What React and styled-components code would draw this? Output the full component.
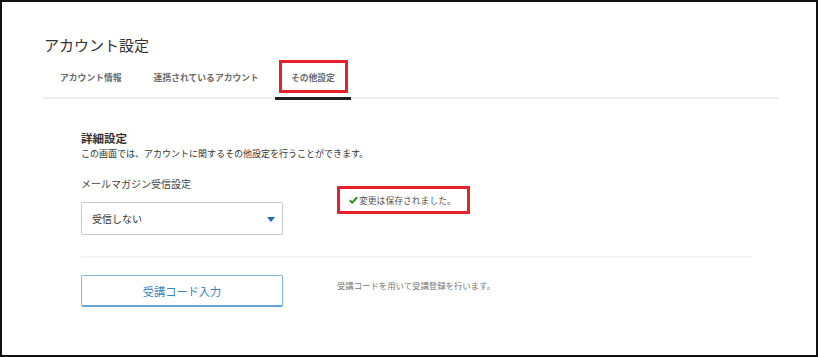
import React from "react";
import styled, { createGlobalStyle } from "styled-components";

const Global = createGlobalStyle`
  html, body { margin: 0; padding: 0; background: #fff; }
  body { font-family: "Noto Sans CJK JP", "Noto Sans", sans-serif; }
  * { box-sizing: border-box; }
`;

const Frame = styled.div`
  width: 818px;
  height: 357px;
  border: 2px solid #111;
  padding: 33px 0 0 41px;
  background: #fff;
`;

const Header = styled.div`
  width: 736px;
`;

const Title = styled.h1`
  margin: 0;
  padding-left: 1px;
  font-size: 15px;
  line-height: 20px;
  font-weight: 400;
  color: #333;
`;

const TabList = styled.div`
  display: flex;
  padding-left: 1px;
  box-shadow: inset 0 -2px 0 #efefef;
`;

const Tab = styled.div`
  padding: 17px 16px 12px;
  font-size: 8.8px;
  line-height: 12px;
  font-weight: 700;
  color: #6b6b6b;
  border-bottom: 3px solid ${(p) => (p.$active ? "#222" : "transparent")};
  margin-bottom: ${(p) => (p.$active ? "-1px" : "0")};
  white-space: nowrap;
`;

const Marked = styled.span`
  position: relative;
  display: inline-block;
  &::after {
    content: "";
    position: absolute;
    left: -12px;
    right: -13px;
    top: -12px;
    bottom: -9px;
    border: 3px solid #e8202b;
  }
`;

const Content = styled.div`
  width: 709px;
  padding: 32px 0 0 38px;
`;

const Heading = styled.h2`
  margin: 0;
  font-size: 11.5px;
  line-height: 14px;
  font-weight: 700;
  color: #333;
`;

const Desc = styled.p`
  margin: 2px 0 0;
  font-size: 9px;
  line-height: 14px;
  color: #333;
`;

const Row = styled.div`
  display: grid;
  grid-template-columns: 202px 1fr;
  column-gap: 54px;
  margin-top: ${(p) => p.$mt || 0}px;
`;

const Col = styled.div`
  display: flex;
  flex-direction: column;
  align-items: flex-start;
`;

const Label = styled.div`
  font-size: 10px;
  line-height: 14px;
  color: #444;
`;

const Select = styled.div`
  margin-top: 11px;
  width: 202px;
  height: 33px;
  border: 1px solid #c9c9c9;
  border-radius: 2px;
  display: flex;
  align-items: center;
  justify-content: space-between;
  padding: 0 7px 0 10px;
  font-size: 10px;
  color: #333;
`;

const Caret = styled.span`
  width: 0;
  height: 0;
  margin-top: 1px;
  border-left: 4px solid transparent;
  border-right: 4px solid transparent;
  border-top: 5px solid #1570c2;
`;

const Notice = styled.div`
  margin-top: 9px;
  width: 133px;
  height: 28px;
  border: 3px solid #e8202b;
  display: flex;
  align-items: center;
  padding-left: 9px;
  font-size: 8.8px;
  color: #555;
  white-space: nowrap;
  gap: 1px;
`;

const Divider = styled.hr`
  margin: 21px 0 17px;
  border: 0;
  height: 2px;
  background: #f3f3f3;
`;

const CodeButton = styled.button`
  width: 202px;
  height: 32px;
  background: #fff;
  border: 1px solid #7fb8e2;
  border-bottom: 2px solid #66a6d6;
  border-radius: 2px;
  font-family: inherit;
  font-size: 11.2px;
  color: #3583c2;
  padding: 0;
  cursor: pointer;
`;

const Hint = styled.div`
  margin-top: 4px;
  font-size: 8.4px;
  line-height: 12px;
  color: #777;
`;

const Check = () => (
  <svg width="9" height="8" viewBox="0 0 9 8">
    <path d="M0.8 4.2 L3.2 6.6 L8.2 1.2" fill="none" stroke="#2c8c2c" strokeWidth="2" />
  </svg>
);

export default function App() {
  return (
    <>
      <Global />
      <Frame>
        <Header>
          <Title>アカウント設定</Title>
          <TabList>
            <Tab>アカウント情報</Tab>
            <Tab>連携されているアカウント</Tab>
            <Tab $active>
              <Marked>その他設定</Marked>
            </Tab>
          </TabList>
        </Header>
        <Content>
          <Heading>詳細設定</Heading>
          <Desc>この画面では、アカウントに関するその他設定を行うことができます。</Desc>
          <Row $mt={16}>
            <Col>
              <Label>メールマガジン受信設定</Label>
              <Select>
                <span>受信しない</span>
                <Caret />
              </Select>
            </Col>
            <Col>
              <Notice>
                <Check />
                変更は保存されました。
              </Notice>
            </Col>
          </Row>
          <Divider />
          <Row>
            <Col>
              <CodeButton>受講コード入力</CodeButton>
            </Col>
            <Col>
              <Hint>受講コードを用いて受講登録を行います。</Hint>
            </Col>
          </Row>
        </Content>
      </Frame>
    </>
  );
}
